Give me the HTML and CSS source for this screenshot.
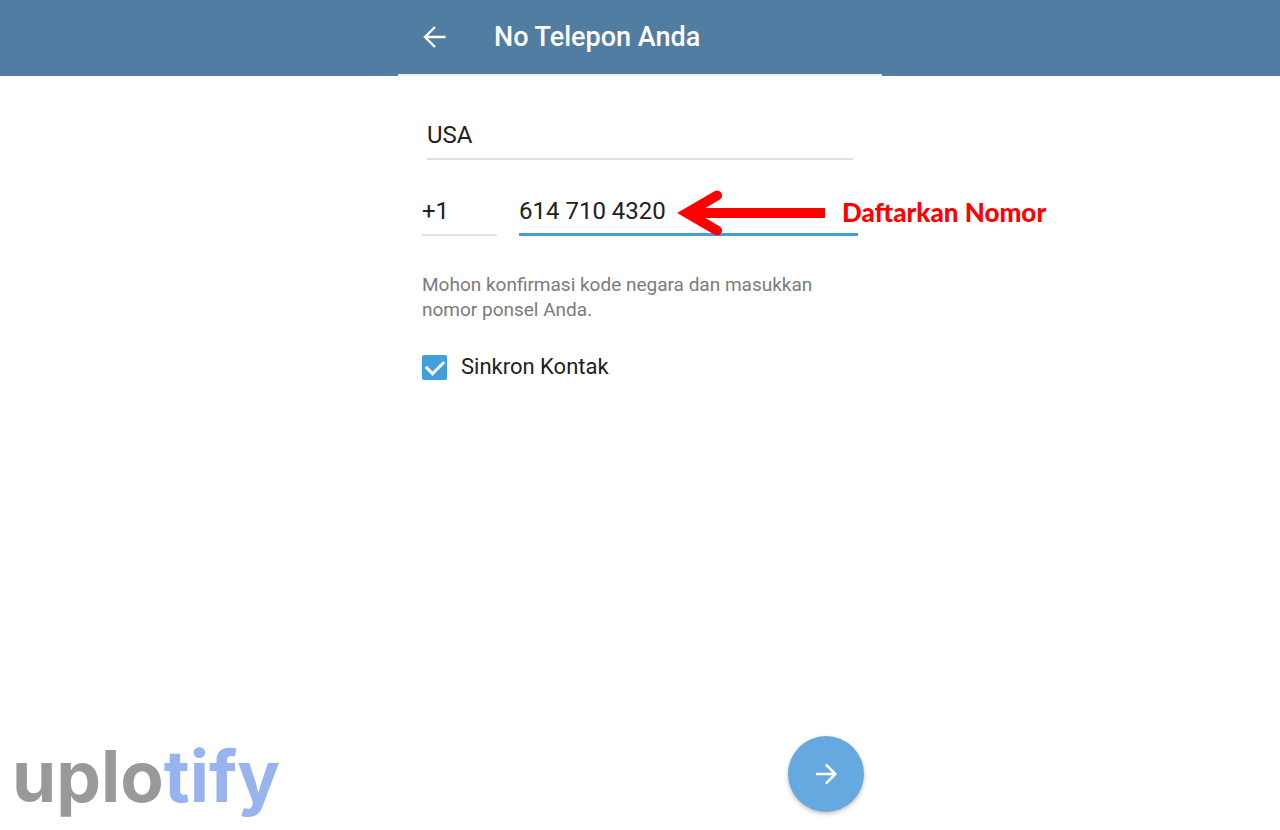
FILE: index.html
```html
<!DOCTYPE html>
<html lang="id">
<head>
  <meta charset="UTF-8">
  <meta name="viewport" content="width=device-width, initial-scale=1">
  <title>No Telepon Anda</title>
  <link rel="stylesheet" href="styles.css">
</head>
<body>

  <header class="topbar">
    <div class="topbar-inner">
      <button type="button" class="back" aria-label="Kembali">
        <svg width="24" height="24" viewBox="0 0 24 24" fill="none" stroke="currentColor" stroke-width="2.4">
          <path d="M23.500 12H3.500M13 2L3 12l10 10"/>
        </svg>
      </button>
      <h1>No Telepon Anda</h1>
    </div>
  </header>

  <main>
    <form id="phoneForm" class="phone-form">
      <input type="text" class="country" name="country" value="USA" aria-label="Negara">

      <div class="phone-row">
        <input type="text" class="code" name="code" value="+1" aria-label="Kode negara">
        <div class="number-field">
          <input type="tel" class="number" name="number" value="614 710 4320" aria-label="Nomor telepon">
          <div class="callout">
            <svg width="150" height="48" viewBox="0 0 150 48" fill="none" stroke="#ff0000">
              <path d="M149 25H20" stroke-width="10"/>
              <path d="M41 7.500L11 25l30 17.500" stroke-width="10" stroke-linecap="round"/>
            </svg>
            <span>Daftarkan Nomor</span>
          </div>
        </div>
      </div>

      <p class="help">Mohon konfirmasi kode negara dan masukkan nomor ponsel Anda.</p>

      <div class="sync">
        <input type="checkbox" id="sync" name="sync" checked>
        <label for="sync">Sinkron Kontak</label>
      </div>
    </form>
  </main>

  <footer class="bottom">
    <div class="logo">uplo<span>tify</span></div>
    <button type="submit" form="phoneForm" class="next" aria-label="Lanjut">
      <svg width="24" height="24" viewBox="0 0 24 24" fill="none" stroke="currentColor" stroke-width="2.6" stroke-linecap="round" stroke-linejoin="round">
        <path d="M3 12h18M12.500 3.200l8.800 8.800-8.800 8.800"/>
      </svg>
    </button>
  </footer>

</body>
</html>
```
FILE: styles.css
```css
* {
  box-sizing: border-box;
}
body {
  margin: 0;
  min-height: 100vh;
  display: flex;
  flex-direction: column;
  background: #fff;
  color: #212121;
  font-family: Roboto, sans-serif;
}
button {
  padding: 0;
  border: none;
  color: #fff;
  cursor: pointer;
}
input {
  font: inherit;
  color: inherit;
}

/* header */
.topbar {
  background: #517da2;
}
.topbar-inner {
  display: flex;
  align-items: center;
  gap: 48px;
  width: 100%;
  max-width: 484px;
  height: 76px;
  margin: 0 auto;
  padding: 0 24px;
  border-bottom: 2px solid #efefef;
}
.back {
  display: flex;
  background: none;
}
h1 {
  margin: 0;
  color: #fff;
  font-size: 27px;
  font-weight: 500;
  line-height: 32px;
}

/* form */
main {
  flex: 1;
}
.phone-form {
  width: 100%;
  max-width: 484px;
  margin: 0 auto;
  padding: 36px 24px 0;
}
.country,
.code,
.number {
  display: block;
  width: 100%;
  height: 48px;
  padding: 0;
  border: none;
  border-bottom: 2px solid #e0e0e0;
  border-radius: 0;
  background: none;
  font-size: 24px;
  outline: none;
}
.country {
  width: calc(100% - 10px);
  margin: 0 5px;
}
.phone-row {
  display: grid;
  grid-template-columns: 75px 1fr;
  gap: 22px;
  margin-top: 28px;
}
.number-field {
  position: relative;
}
.number {
  border-bottom: 3px solid #419fdd;
}
.callout {
  position: absolute;
  top: 0;
  left: 157px;
  display: flex;
  align-items: center;
  gap: 16px;
  color: #ff0000;
  font-family: Lato, sans-serif;
  font-size: 26px;
  font-weight: 900;
  white-space: nowrap;
}
.callout svg {
  flex: none;
}
.help {
  margin: 36px 0 0;
  color: #7b7b7b;
  font-size: 19px;
  line-height: 25px;
}
.sync {
  display: flex;
  align-items: center;
  gap: 14px;
  margin-top: 31px;
  font-size: 22px;
  line-height: 28px;
}
.sync input {
  appearance: none;
  display: grid;
  place-items: center;
  width: 25px;
  height: 25px;
  margin: 0;
  border-radius: 2px;
  border: 2px solid #419fdd;
}
.sync input:checked {
  background: #419fdd;
}
.sync input:checked::before {
  content: "";
  width: 15px;
  height: 8px;
  border: solid #fff;
  border-width: 0 0 3px 3px;
  transform: translateY(-2px) rotate(-45deg);
}

/* logo and next button */
.bottom {
  display: grid;
  grid-template-columns: 1fr minmax(auto, 484px) 1fr;
  align-items: end;
  padding-bottom: 18px;
}
.logo {
  padding-left: 12px;
  color: #999;
  font-family: Inter, sans-serif;
  font-size: 71px;
  font-weight: 700;
  line-height: 72px;
}
.logo span {
  color: #97b4ee;
}
.next {
  display: grid;
  place-items: center;
  justify-self: end;
  width: 76px;
  height: 76px;
  margin-right: 18px;
  border-radius: 50%;
  background: #65a9e0;
  box-shadow: 0 2px 4px rgba(0, 0, 0, 0.25);
}
```
